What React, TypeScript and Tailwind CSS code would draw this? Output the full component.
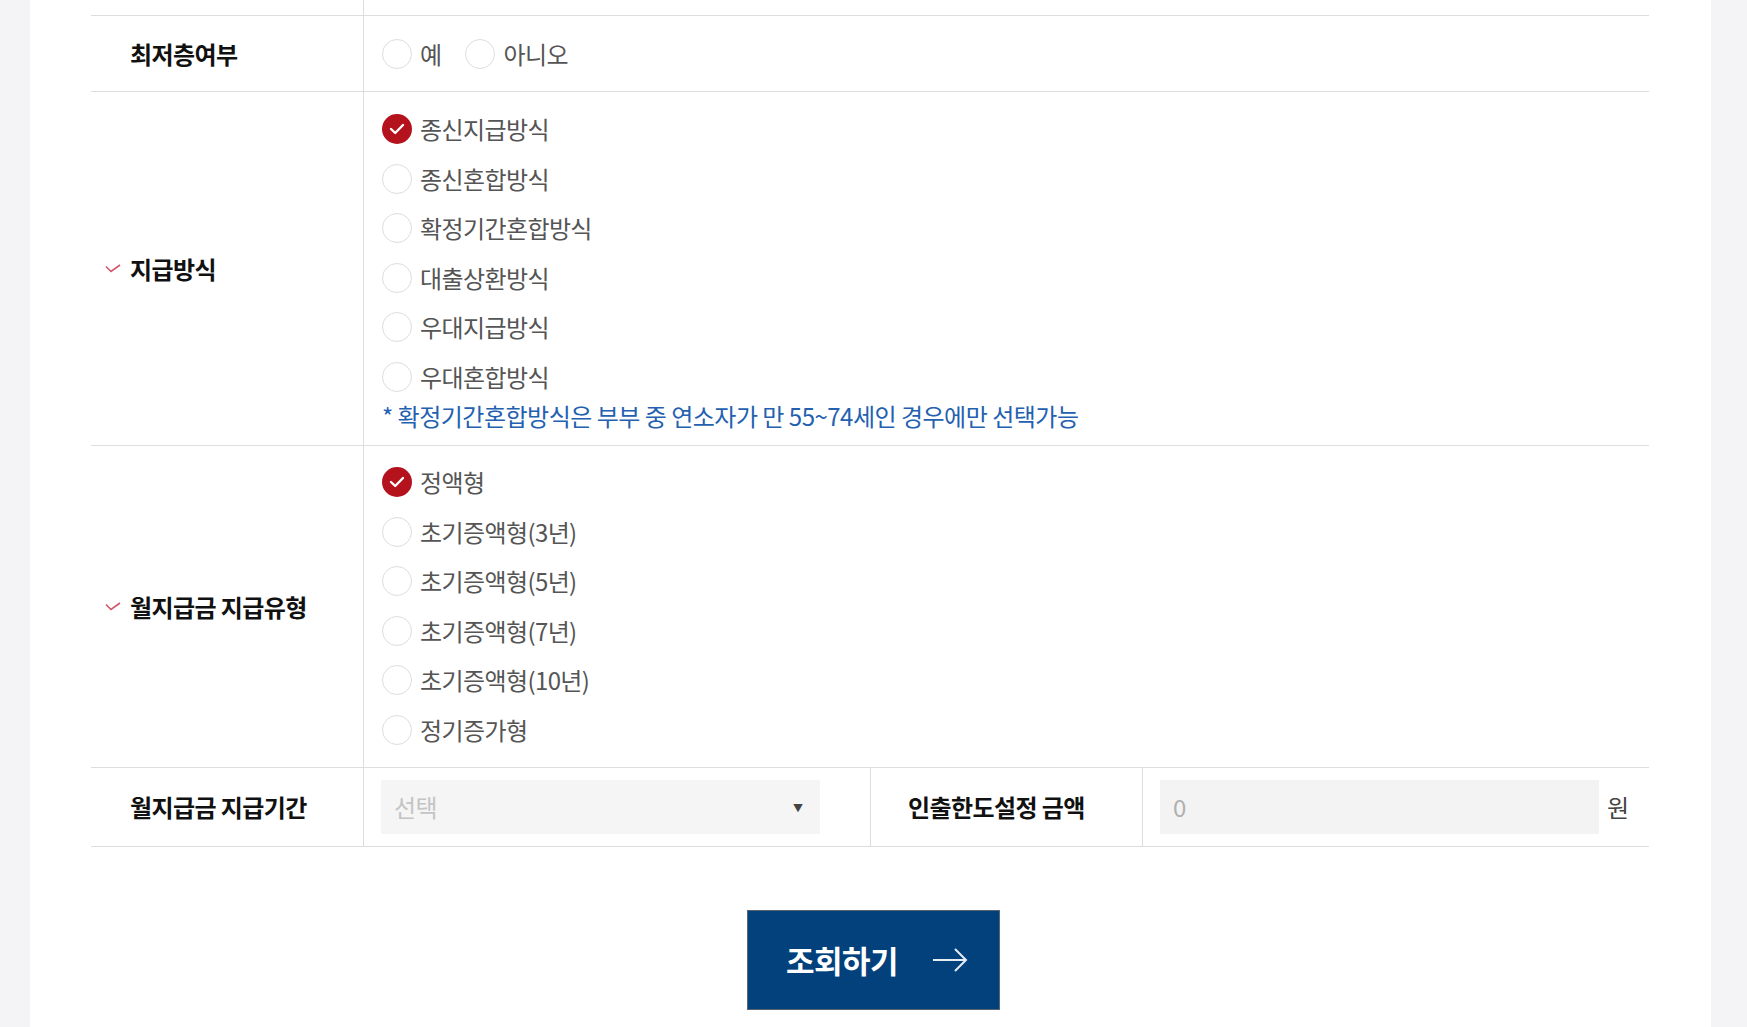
import { ReactNode } from 'react'

const FONT = { fontFamily: '"Noto Sans CJK KR", "Noto Sans", sans-serif' }

function LabelCheck() {
  return (
    <svg width="16" height="9" viewBox="0 0 16 9" fill="none" className="shrink-0">
      <path d="M1 2.5 L6 7.5 L15 1" stroke="#d2566a" strokeWidth="1.6" />
    </svg>
  )
}

function Radio({ checked }: { checked?: boolean }) {
  if (checked) {
    return (
      <span className="w-[30px] h-[30px] rounded-full bg-[#b4121d] flex items-center justify-center shrink-0">
        <svg width="16" height="12" viewBox="0 0 16 12" fill="none">
          <path d="M2 6 L6.2 10 L14 2" stroke="#fff" strokeWidth="2.4" strokeLinecap="round" strokeLinejoin="round" />
        </svg>
      </span>
    )
  }
  return <span className="w-[30px] h-[30px] rounded-full border border-[#dddddd] bg-white shrink-0" />
}

function Option({ label, checked }: { label: string; checked?: boolean }) {
  return (
    <label className="flex items-center gap-[8px] h-[30px] text-[24px] tracking-[-0.6px] text-[#555]">
      <Radio checked={checked} />
      <span className="leading-none">{label}</span>
    </label>
  )
}

function LabelCell({ children, mark }: { children: ReactNode; mark?: boolean }) {
  return (
    <div className="w-[273px] shrink-0 flex items-center pl-[14px] border-r border-[#dddddd]">
      <span className="w-[25px] flex items-center">{mark && <LabelCheck />}</span>
      <span className="text-[24px] font-bold tracking-[-0.6px] text-[#111]">{children}</span>
    </div>
  )
}

export default function App() {
  const payTypes = ['종신지급방식', '종신혼합방식', '확정기간혼합방식', '대출상환방식', '우대지급방식', '우대혼합방식']
  const monthTypes = ['정액형', '초기증액형(3년)', '초기증액형(5년)', '초기증액형(7년)', '초기증액형(10년)', '정기증가형']

  return (
    <div className="w-full h-[1027px] bg-[#f4f4f6] overflow-hidden" style={FONT}>
      <div className="ml-[30px] w-[1681px] h-full bg-white pl-[61px] pr-[62px]">
        <div className="w-[1558px]">
          {/* tail of the row above */}
          <div className="flex h-[16px] border-b border-[#dddddd]">
            <div className="w-[273px] border-r border-[#dddddd]" />
          </div>

          {/* 최저층여부 */}
          <div className="flex h-[76px] border-b border-[#dddddd]">
            <LabelCell>최저층여부</LabelCell>
            <div className="flex items-center pl-[18px] gap-[24px]">
              <Option label="예" />
              <Option label="아니오" />
            </div>
          </div>

          {/* 지급방식 */}
          <div className="flex h-[354px] border-b border-[#dddddd]">
            <LabelCell mark>지급방식</LabelCell>
            <div className="flex flex-col pl-[18px] pt-[22px]">
              <div className="flex flex-col gap-[19.6px]">
                {payTypes.map((t, i) => (
                  <Option key={t} label={t} checked={i === 0} />
                ))}
              </div>
              <p className="mt-[9px] h-[30px] flex items-center text-[24px] tracking-[-0.5px] text-[#2361b0]">
                * 확정기간혼합방식은 부부 중 연소자가 만 55~74세인 경우에만 선택가능
              </p>
            </div>
          </div>

          {/* 월지급금 지급유형 */}
          <div className="flex h-[322px] border-b border-[#dddddd]">
            <LabelCell mark>월지급금 지급유형</LabelCell>
            <div className="flex flex-col pl-[18px] pt-[21px] gap-[19.6px]">
              {monthTypes.map((t, i) => (
                <Option key={t} label={t} checked={i === 0} />
              ))}
            </div>
          </div>

          {/* 지급기간 / 인출한도 */}
          <div className="flex h-[79px] border-b border-[#dddddd]">
            <LabelCell>월지급금 지급기간</LabelCell>
            <div className="w-[507px] shrink-0 flex items-center pl-[17px] border-r border-[#dddddd]">
              <div className="w-[439px] h-[54px] bg-[#f5f5f5] flex items-center justify-between pl-[13px] pr-[17px]">
                <span className="text-[24px] text-[#c4c4c4] tracking-[-0.6px]">선택</span>
                <span className="text-[10px] text-[#444]">▼</span>
              </div>
            </div>
            <div className="w-[272px] shrink-0 flex items-center pl-[37px] border-r border-[#dddddd]">
              <span className="text-[24px] font-bold tracking-[-0.6px] text-[#111]">인출한도설정 금액</span>
            </div>
            <div className="flex items-center pl-[17px]">
              <div className="w-[439px] h-[54px] bg-[#f3f3f3] flex items-center pl-[13px]">
                <span className="text-[24px] text-[#b0b0b0]">0</span>
              </div>
              <span className="ml-[8px] text-[24px] text-[#444]">원</span>
            </div>
          </div>

          <div className="flex justify-center pt-[63px] pl-[7px]">
            <button className="w-[253px] h-[100px] bg-[#03417c] border border-[#5a6370] flex items-center pl-[38px] gap-[34px] text-white">
              <span className="text-[31px] font-bold tracking-[-0.5px]">조회하기</span>
              <svg width="36" height="26" viewBox="0 0 36 26" fill="none">
                <path d="M1 13 H34 M23 2 L34 13 L23 24" stroke="#e6ecf4" strokeWidth="2" />
              </svg>
            </button>
          </div>
        </div>
      </div>
    </div>
  )
}
